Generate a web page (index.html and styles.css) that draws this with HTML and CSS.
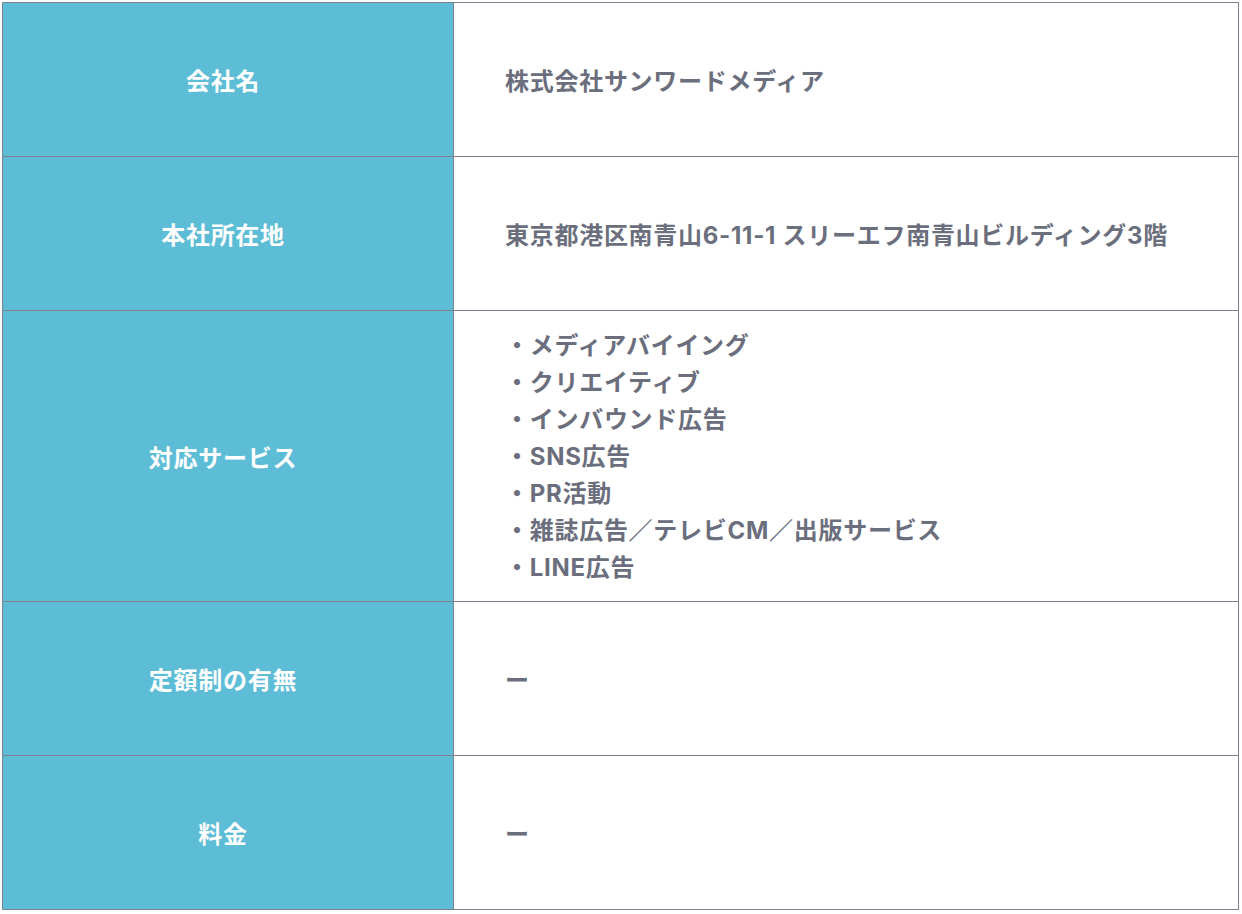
FILE: index.html
```html
<!DOCTYPE html>
<html lang="ja">
<head>
<meta charset="utf-8">
<title>会社概要</title>
<link rel="stylesheet" href="styles.css">
</head>
<body>
<div class="wrap">
<table class="info">
  <tr class="row">
    <th class="head">会社名</th>
    <td class="cell">株式会社サンワードメディア</td>
  </tr>
  <tr class="row">
    <th class="head">本社所在地</th>
    <td class="cell">東京都港区南青山6-11-1 スリーエフ南青山ビルディング3階</td>
  </tr>
  <tr class="row">
    <th class="head">対応サービス</th>
    <td class="cell cell-list">
      <ul class="list">
        <li>・メディアバイイング</li>
        <li>・クリエイティブ</li>
        <li>・インバウンド広告</li>
        <li>・SNS広告</li>
        <li>・PR活動</li>
        <li>・雑誌広告／テレビCM／出版サービス</li>
        <li>・LINE広告</li>
      </ul>
    </td>
  </tr>
  <tr class="row">
    <th class="head">定額制の有無</th>
    <td class="cell">ー</td>
  </tr>
  <tr class="row">
    <th class="head">料金</th>
    <td class="cell">ー</td>
  </tr>
</table>
</div>
</body>
</html>
```
FILE: styles.css
```css
html, body {
  margin: 0;
  padding: 0;
  background: #ffffff;
}
.wrap {
  padding: 2px 3px 3px 2px;
}
.info {
  width: 1237px;
  border-collapse: collapse;
  font-family: "Inter", "Noto Sans CJK JP", sans-serif;
  font-weight: 700;
  font-size: 24px;
  letter-spacing: 0.03em;
  line-height: 37px;
}
.head, .cell {
  border: 1px solid #7f8190;
  height: 154px;
  box-sizing: border-box;
  vertical-align: middle;
}
.head {
  width: 451px;
  background: #5ebdd6;
  color: #ffffff;
  text-align: center;
  padding: 4px 16px 0 6px;
}
.cell {
  color: #6b6e7c;
  text-align: left;
  padding: 4px 40px 0 51px;
}
.cell-list {
  padding-top: 16px;
  padding-bottom: 15px;
}
.list {
  list-style: none;
  margin: 0;
  padding: 0;
}
.list li {
  margin: 0;
}
```
